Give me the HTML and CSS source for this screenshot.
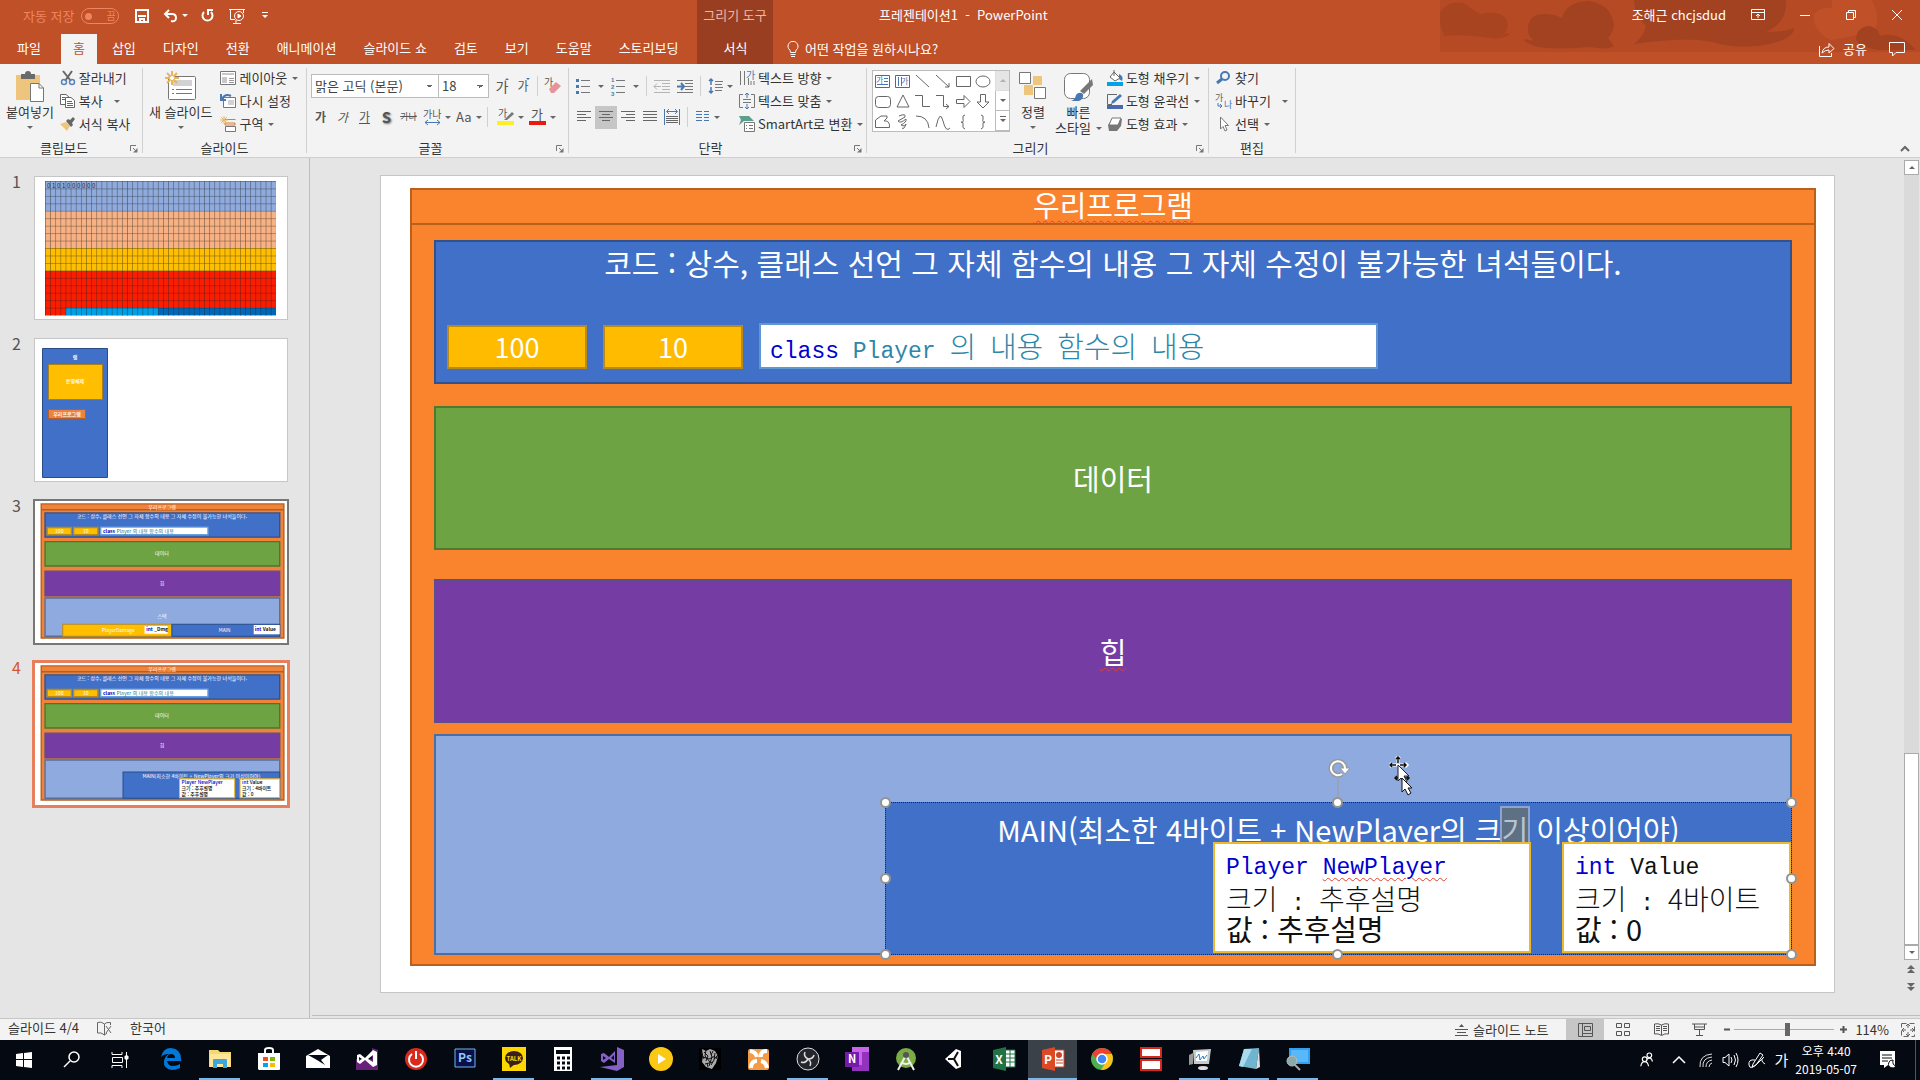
FILE: index.html
```html
<!DOCTYPE html>
<html lang="ko">
<head>
    <meta charset="UTF-8">
    <meta name="viewport" content="width=device-width, initial-scale=1.0">
    <title>프레젠테이션1 - PowerPoint</title>
    <link rel="stylesheet" href="styles.css">
</head>
<body>
    <!-- Title bar and tabs -->
    <header class="header">
        <svg class="header-art" width="480" height="52" viewBox="0 0 480 52">
            <rect width="480" height="52" fill="#b54a24"/>
            <path d="M0 12Q8 0 24 3Q32 10 40 14Q58 10 66 18Q70 28 64 34L70 33Q66 40 50 38Q24 34 4 36Q-2 20 0 12Z" fill="#a94421"/>
            <path d="M88 30Q88 14 104 14Q114 14 122 18Q126 2 148 1Q172 4 174 26Q172 34 168 38L174 46Q168 50 150 47Q110 50 94 46Q84 42 84 39L94 41Q88 36 88 30Z" fill="#a34220"/>
            <path d="M194 0H346Q348 22 326 32Q344 32 354 28Q354 38 330 44Q300 50 272 42Q250 36 194 44Q204 36 206 26Q194 14 194 0Z" fill="#a34220"/>
            <path d="M392 0H432Q440 16 436 28Q420 36 390 40Q372 30 374 14Q382 6 392 8Z" fill="#c05027"/>
            <path d="M416 38Q418 26 430 26Q438 28 440 36Q454 32 468 42L476 50H438Q416 46 416 38Z" fill="#a34220"/>
        </svg>
        <div class="title-row">
            <div class="quick-access">
                <span class="autosave">자동 저장</span>
                <button class="toggle" aria-label="자동 저장"><i></i>끔</button>
                <button class="qa save" aria-label="저장"><svg width="16" height="16" viewBox="0 0 16 16" fill="none" stroke="#fff" stroke-width="2"><path d="M2 2H14V14H2ZM4 8H12M6 14V11H10V14"/></svg></button>
                <button class="qa" aria-label="실행 취소"><svg width="26" height="16" viewBox="0 0 26 16"><path d="M3 6H10Q14 6 14 10T9 13M7 2L3 6L7 10" fill="none" stroke="#fff" stroke-width="2"/><path d="M20 6H26L23 9Z" fill="#fff"/></svg></button>
                <button class="qa" aria-label="다시 실행"><svg width="16" height="16" viewBox="0 0 16 16" fill="none" stroke="#fff" stroke-width="2"><path d="M4 4A5 5 0 1 0 11 4M8 1V7M8 2H13"/></svg></button>
                <button class="qa" aria-label="처음부터"><svg width="18" height="16" viewBox="0 0 18 16" fill="none" stroke="#fff" stroke-width="1"><path d="M1 1.500H17M2.500 2V11.500H7M15.500 2V5M5 15.500H13M8 12V15"/><circle cx="11" cy="8" r="4.500"/><path d="M10 6V10L13 8Z" fill="#fff"/></svg></button>
                <button class="qa more" aria-label="빠른 실행 도구 모음"><svg width="6" height="8" viewBox="0 0 6 8" fill="#fff"><path d="M0 0H6V1H0ZM0 3H6L3 6Z"/></svg></button>
            </div>
            <div class="tool-name">그리기 도구</div>
            <div class="doc-title">프레젠테이션1&nbsp; -&nbsp; PowerPoint</div>
            <div class="window-controls">
                <span class="user">조해근 chcjsdud</span>
                <button aria-label="리본 표시 옵션"><svg width="14" height="12" viewBox="0 0 14 12" fill="none" stroke="#fff"><path d="M.5 .5H13.500V10.500H.5ZM1 3.500H13M7 9V5M5 7L7 5L9 7"/></svg></button>
                <button aria-label="최소화"><svg width="12" height="12" viewBox="0 0 12 12"><path d="M1 6.500H11" stroke="#fff"/></svg></button>
                <button aria-label="이전 크기로"><svg width="12" height="12" viewBox="0 0 12 12" fill="none" stroke="#fff"><path d="M1.500 3.500H8.500V10.500H1.500ZM3.500 3V1.500H10.500V8.500H9"/></svg></button>
                <button aria-label="닫기"><svg width="12" height="12" viewBox="0 0 12 12"><path d="M1 1L11 11M11 1L1 11" stroke="#fff"/></svg></button>
            </div>
        </div>
        <div class="tab-row">
            <nav class="tabs">
                <a href="#" class="file">파일</a>
                <a href="#" class="active">홈</a>
                <a href="#">삽입</a>
                <a href="#">디자인</a>
                <a href="#">전환</a>
                <a href="#">애니메이션</a>
                <a href="#">슬라이드 쇼</a>
                <a href="#">검토</a>
                <a href="#">보기</a>
                <a href="#">도움말</a>
                <a href="#">스토리보딩</a>
            </nav>
            <a href="#" class="tool-tab">서식</a>
            <button class="tell-me"><svg width="12" height="17" viewBox="0 0 12 17" fill="none" stroke="#fff"><path d="M3.500 11.500Q3.500 9 1.500 7.500A5 5 0 1 1 10.500 7.500Q8.500 9 8.500 11.500ZM3.500 13.500H8.500M4 15.500H8"/></svg>어떤 작업을 원하시나요?</button>
            <div class="share">
                <button><svg width="16" height="15" viewBox="0 0 16 15" fill="none" stroke="#fff"><path d="M.5 4V14.500H12.500V11M3 11Q4 5 10 5V1.500L15 6.500L10 11V8Q6 8 3 11Z"/></svg>공유</button>
                <button aria-label="메모"><svg width="16" height="15" viewBox="0 0 16 15" fill="none" stroke="#fff"><path d="M.5 .5H15.500V10.500H7L3.500 14V10.500H.5Z"/></svg></button>
            </div>
        </div>
    </header>

    <!-- Ribbon -->
    <section class="ribbon">
        <div class="group clipboard">
            <div class="tools">
                <button class="big"><svg width="30" height="32" viewBox="0 0 30 32"><path d="M1 4H25V29H1Z" fill="#edc57c"/><path d="M6 3H10Q10 0 13 0T16 3H20V8H6Z" fill="#6a6a6a"/><path d="M15.500 12.500H24L28.500 17V30.500H15.500Z" fill="#fff" stroke="#777"/><path d="M24 12.500V17H28.500" fill="none" stroke="#777"/></svg><span>붙여넣기</span><i class="arr"></i></button>
                <div class="stack-tools">
                    <button><svg width="16" height="16" viewBox="0 0 16 16" fill="none"><path d="M3 1L11 11M12 1L5 11" stroke="#666" stroke-width="2"/><circle cx="4" cy="12" r="2.500" stroke="#5b86bd" stroke-width="1.500"/><circle cx="12" cy="12" r="2.500" stroke="#5b86bd" stroke-width="1.500"/></svg>잘라내기</button>
                    <button><svg width="16" height="16" viewBox="0 0 16 16" fill="#fff" stroke="#666"><path d="M.5 1.500H6L9.500 4.500V11.500H.5Z"/><path d="M5.500 4.500H11L14.500 7.500V14.500H5.500Z"/><path d="M7 8.500H12M7 10.500H13M7 12.500H13M2 4.500H5M2 6.500H5"/></svg>복사<i class="arr wide"></i></button>
                    <button><svg width="16" height="16" viewBox="0 0 16 16"><path d="M0 8L6 6L10 10L7 15Z" fill="#edc57c"/><path d="M6 5L8 3L10 4L13 1L15 3L12 7L13 9L11 11Z" fill="#666"/></svg>서식 복사</button>
                </div>
            </div>
            <div class="group-name">클립보드<button class="launcher" aria-label="클립보드 옵션"><svg width="8" height="8" viewBox="0 0 8 8"><path d="M.5 6V.5H6M3 3L7 7" fill="none" stroke="#777"/><path d="M3 7.500H7.500V3Z" fill="#777"/></svg></button></div>
        </div>

        <div class="group slides">
            <div class="tools">
                <button class="big"><svg width="32" height="32" viewBox="0 0 32 32"><rect x="3.500" y="5.500" width="27" height="23" rx="1" fill="#fff" stroke="#777"/><path d="M8 9H27V15H8Z" fill="#d2d2d2"/><path d="M11 18.500H27M11 22.500H27M7 18.500H9M7 22.500H9" stroke="#777"/><path d="M7 0V14M0 7H14M2 2L12 12M12 2L2 12" stroke="#e9b45c" stroke-width="2"/><circle cx="7" cy="7" r="2.500" fill="#fff" stroke="#e9b45c"/></svg><span>새 슬라이드</span><i class="arr"></i></button>
                <div class="stack-tools">
                    <button><svg width="16" height="16" viewBox="0 0 16 16"><path d="M.5 1.500H15.500V14.500H.5Z" fill="#fff" stroke="#777"/><path d="M2 3H14V5H2ZM2 7H7V13H2Z" fill="#c8c8c8"/><path d="M9 8.500H14M9 10.500H14M9 12.500H14" stroke="#999"/></svg>레이아웃<i class="arr"></i></button>
                    <button><svg width="16" height="16" viewBox="0 0 16 16"><path d="M3.500 4.500H15.500V14.500H3.500Z" fill="#fff" stroke="#777"/><path d="M8 7H14V12H8Z" fill="#d2d2d2"/><path d="M2 6Q5 0 11 3M1 1V7H6" fill="none" stroke="#4679b3" stroke-width="2"/></svg>다시 설정</button>
                    <button><svg width="16" height="16" viewBox="0 0 16 16"><path d="M5 3.500H15.500M5 7H15V9H5Z" stroke="#da7b3c" fill="none"/><path d="M5.500 10.500H15.500V15.500H5.500Z" fill="#fff" stroke="#777"/><path d="M4 0V8M0 4H8M1 1L7 7M7 1L1 7" stroke="#e9b45c"/></svg>구역<i class="arr"></i></button>
                </div>
            </div>
            <div class="group-name">슬라이드</div>
        </div>

        <div class="group font">
            <div class="tools rows">
                <div class="row">
                    <span class="selects"><select class="font-name" aria-label="글꼴"><option>맑은 고딕 (본문)</option></select><select class="font-size" aria-label="글꼴 크기"><option>18</option></select></span>
                    <button class="ic grow" aria-label="글꼴 크기 크게">가<i class="up"></i></button>
                    <button class="ic shrink" aria-label="글꼴 크기 작게">가<i class="down"></i></button>
                    <span class="sep"></span>
                    <button class="ic" aria-label="모든 서식 지우기"><svg width="18" height="18" viewBox="0 0 18 18"><text x="0" y="9" font-size="10" fill="#555">가</text><path d="M5 12L12 5L17 9L10 16H7Z" fill="#e5949a"/></svg></button>
                </div>
                <div class="row">
                    <button class="ic w22"><b>가</b></button>
                    <button class="ic w22"><em>가</em></button>
                    <button class="ic w22"><u>가</u></button>
                    <button class="ic w22 shadow">S</button>
                    <button class="ic w22 strike">가나</button>
                    <button class="ic gap-text" aria-label="문자 간격"><svg width="17" height="17" viewBox="0 0 17 17"><text x="-1" y="9" font-size="10" fill="#555">가나</text><path d="M1 13.500H16M4 11L1 13.500L4 16M13 11L16 13.500L13 16" fill="none" stroke="#4679b3"/></svg><i class="arr"></i></button>
                    <button class="ic case">Aa<i class="arr"></i></button>
                    <span class="sep"></span>
                    <button class="ic" aria-label="텍스트 강조 색"><svg width="17" height="18" viewBox="0 0 17 18"><text x="1" y="9" font-size="10" fill="#555">가</text><path d="M7 12L15 4L17 6L10 12Z" fill="#777"/><path d="M0 13H17V17H0Z" fill="#ffee26"/></svg><i class="arr"></i></button>
                    <button class="ic" aria-label="글꼴 색"><svg width="17" height="18" viewBox="0 0 17 18"><text x="2" y="11" font-size="13" fill="#555">가</text><path d="M0 13H17V17H0Z" fill="#e81b0c"/></svg><i class="arr"></i></button>
                </div>
            </div>
            <div class="group-name">글꼴<button class="launcher" aria-label="글꼴 옵션"><svg width="8" height="8" viewBox="0 0 8 8"><path d="M.5 6V.5H6M3 3L7 7" fill="none" stroke="#777"/><path d="M3 7.500H7.500V3Z" fill="#777"/></svg></button></div>
        </div>

        <div class="group paragraph">
            <div class="tools">
                <div class="rows">
                    <div class="row">
                        <button class="ic" aria-label="글머리 기호"><svg width="15" height="16" viewBox="0 0 15 16"><path d="M0 1H3V4H0ZM0 7H3V10H0ZM0 13H3V16H0Z" fill="#4679b3"/><path d="M5 2.500H14M5 8.500H14M5 14.500H14" stroke="#777"/></svg><i class="arr far"></i></button>
                        <button class="ic" aria-label="번호 매기기"><svg width="15" height="18" viewBox="0 0 15 18"><text x="0" y="5" class="tiny">1</text><text x="0" y="12" class="tiny">2</text><text x="0" y="19" class="tiny">3</text><path d="M5 3.500H14M5 9.500H14M5 15.500H14" stroke="#777"/></svg><i class="arr far"></i></button>
                        <span class="sep"></span>
                        <button class="ic" aria-label="목록 수준 줄임"><svg width="16" height="14" viewBox="0 0 16 14"><path d="M0 1.500H16M8 4.500H16M8 7.500H16M8 10.500H16M0 13.500H16M0 7.500H7M3 4.500L0 7.500L3 10.500" fill="none" stroke="#b4b4b4"/></svg></button>
                        <button class="ic" aria-label="목록 수준 늘림"><svg width="16" height="14" viewBox="0 0 16 14"><path d="M0 1.500H16M8 4.500H16M8 7.500H16M8 10.500H16M0 13.500H16" stroke="#777"/><path d="M0 7.500H7M4 4L7 7.500L4 11" fill="none" stroke="#4679b3" stroke-width="2"/></svg></button>
                        <span class="sep"></span>
                        <button class="ic" aria-label="줄 간격"><svg width="15" height="16" viewBox="0 0 15 16"><path d="M3 1V7M3 9V15M1 3L3 1L5 3M1 13L3 15L5 13" fill="none" stroke="#4679b3" stroke-width="1.500"/><path d="M7 3.500H15M7 6.500H14M7 9.500H15M7 12.500H14" stroke="#777"/></svg><i class="arr"></i></button>
                    </div>
                    <div class="row">
                        <button class="ic al" aria-label="왼쪽 맞춤"><svg width="14" height="12" viewBox="0 0 14 12"><path d="M0 .5H14M0 3.500H9M0 6.500H14M0 9.500H9" stroke="#666"/></svg></button>
                        <button class="ic al on" aria-label="가운데 맞춤"><svg width="14" height="12" viewBox="0 0 14 12"><path d="M0 .5H14M3 3.500H11M0 6.500H14M3 9.500H11" stroke="#666"/></svg></button>
                        <button class="ic al" aria-label="오른쪽 맞춤"><svg width="14" height="12" viewBox="0 0 14 12"><path d="M0 .5H14M5 3.500H14M0 6.500H14M5 9.500H14" stroke="#666"/></svg></button>
                        <button class="ic al" aria-label="양쪽 맞춤"><svg width="14" height="12" viewBox="0 0 14 12"><path d="M0 .5H14M0 3.500H14M0 6.500H14M0 9.500H14" stroke="#666"/></svg></button>
                        <button class="ic al" aria-label="균등 분할"><svg width="16" height="16" viewBox="0 0 16 16"><path d="M.5 0V16M15.500 0V16M3 2.500H13M5 0L2.500 2.500L5 5M11 0L13.500 2.500L11 5" fill="none" stroke="#4679b3"/><path d="M2 7.500H14M2 9.500H14M2 11.500H14M2 13.500H14" stroke="#666"/></svg></button>
                        <span class="sep"></span>
                        <button class="ic" aria-label="열"><svg width="14" height="12" viewBox="0 0 14 12"><path d="M0 .5H6M0 3.500H6M0 6.500H6M0 9.500H6M8 .5H13M8 3.500H13M8 6.500H13M8 9.500H13" stroke="#4679b3"/></svg><i class="arr"></i></button>
                    </div>
                </div>
                <div class="stack-tools">
                    <button><svg width="16" height="16" viewBox="0 0 16 16"><path d="M1.500 1V15M5.500 1V15M9.500 8V15" stroke="#777"/><text x="7" y="9" font-size="10" fill="#4679b3">가</text><path d="M12 11V15M15 11V15" stroke="#777"/></svg>텍스트 방향<i class="arr"></i></button>
                    <button><svg width="16" height="16" viewBox="0 0 16 16" fill="none"><path d="M4 1.500H.5V14.500H4M12 1.500H15.500V14.500H12M4 6.500H12M4 9.500H12" stroke="#777"/><path d="M8 0V5M6 2L8 0L10 2M8 11V16M6 14L8 16L10 14" stroke="#4679b3"/></svg>텍스트 맞춤<i class="arr"></i></button>
                    <button><svg width="16" height="16" viewBox="0 0 16 16"><path d="M0 0H10L15 5H5L0 9L2 4Z" fill="#5b9f8f"/><path d="M5.500 6.500H15.500V15.500H5.500Z" fill="#fff" stroke="#777"/><path d="M7 9.500H8M10 9.500H14M7 12.500H8M10 12.500H14" stroke="#777"/></svg>SmartArt로 변환<i class="arr"></i></button>
                </div>
            </div>
            <div class="group-name">단락<button class="launcher" aria-label="단락 옵션"><svg width="8" height="8" viewBox="0 0 8 8"><path d="M.5 6V.5H6M3 3L7 7" fill="none" stroke="#777"/><path d="M3 7.500H7.500V3Z" fill="#777"/></svg></button></div>
        </div>

        <div class="group drawing">
            <div class="tools">
                <div class="gallery">
                    <svg width="122" height="60" viewBox="0 0 122 60" fill="none" stroke="#666">
                        <path d="M2.500 4.500H16.500V16.500H2.500ZM22.500 4.500H36.500V16.500H22.500Z" stroke="#666"/>
                        <path d="M11 7.500H15M11 10.500H15M4 13.500H15M25.500 6V15M28.500 6V15" stroke="#4679b3"/>
                        <text x="3" y="12" font-size="8" class="blue">가</text><text x="28" y="13" font-size="8" class="blue">가</text>
                        <path d="M43 4L56 16M63 4L76 16M76 12V16H72M83.500 5.500H97.500V15.500H83.500Z"/>
                        <ellipse cx="110" cy="10.500" rx="7" ry="5.500"/>
                        <rect x="2.500" y="25.500" width="15" height="11" rx="3"/>
                        <path d="M30 24L36 36H24ZM42 24.500H49.500V35.500H57M63 24.500H70.500V35.500H76M73 33L76 35.500L73 38M83.500 28.500H91V24.500L97 30.500L91 36.500V32.500H83.500ZM107.500 23.500H112.500V31H116L110 37L104 31H107.500Z"/>
                        <path d="M2.500 56.500V49L8 45H14V47L11 50Q17 49 16.500 56.500ZM26 45Q33 42 32 46L25 50Q27 53 33 48Q34 51 28 54Q32 56 33 53Q31 59 29 57M43 45Q55 45 56 57M63 56Q67 38 70 50T77 57M92 44Q89 44 90 48T88 51Q91 51 90 54T92 58M108 44Q111 44 110 48T112 51Q109 51 110 54T108 58"/>
                    </svg>
                    <div class="gallery-scroll">
                        <button class="off" aria-label="위로"><i class="tri-up"></i></button>
                        <button aria-label="아래로"><i class="arr"></i></button>
                        <button aria-label="자세히"><i class="arr bar"></i></button>
                    </div>
                </div>
                <button class="big arrange"><svg width="28" height="32" viewBox="0 0 28 32"><path d="M14 5H23V14H14ZM5 14H14V24H5Z" fill="#edc57c"/><path d="M.5 1.500H11.500V12.500H.5ZM15.500 16.500H26.500V27.500H15.500Z" fill="#fff" stroke="#777"/></svg><span>정렬</span><i class="arr"></i></button>
                <button class="big quick"><svg width="30" height="32" viewBox="0 0 30 32"><rect x="1.500" y="2.500" width="25" height="25" rx="6" fill="#fff" stroke="#777"/><path d="M17 20L29 8L30 14L21 23Z" fill="#777"/><path d="M8 30Q12 29 13 24Q16 20 20 23Q21 28 16 30Z" fill="#4679b3"/></svg><span>빠른</span><span>스타일<i class="arr"></i></span></button>
                <div class="stack-tools">
                    <button><svg width="16" height="16" viewBox="0 0 16 16"><path d="M7 2L13 8L8 11L3 7ZM7 0V6" fill="#fff" stroke="#666"/><path d="M12 4Q17 6 15 11L12 9Z" fill="#4679b3"/><path d="M0 12H16V16H0Z" fill="#00a2e8"/></svg>도형 채우기<i class="arr"></i></button>
                    <button><svg width="16" height="16" viewBox="0 0 16 16"><path d="M10 1.500H.5V11.500H5" fill="none" stroke="#666"/><path d="M4 11L5 8L13 1L15 3L7 10Z" fill="#4679b3"/><path d="M0 12H16V16H0Z" fill="#4a68b0"/></svg>도형 윤곽선<i class="arr"></i></button>
                    <button><svg width="16" height="16" viewBox="0 0 16 16"><path d="M1 9L5 3H15L14 10L10 15H2Z" fill="#777"/><path d="M5 2H14L11 9H2Z" fill="#fff" stroke="#777"/></svg>도형 효과<i class="arr"></i></button>
                </div>
            </div>
            <div class="group-name">그리기<button class="launcher" aria-label="그리기 옵션"><svg width="8" height="8" viewBox="0 0 8 8"><path d="M.5 6V.5H6M3 3L7 7" fill="none" stroke="#777"/><path d="M3 7.500H7.500V3Z" fill="#777"/></svg></button></div>
        </div>

        <div class="group editing">
            <div class="tools">
                <div class="stack-tools">
                    <button><svg width="16" height="16" viewBox="0 0 16 16"><circle cx="9" cy="6" r="4" fill="none" stroke="#4679b3" stroke-width="2"/><path d="M6 9L1 13" stroke="#4679b3" stroke-width="3"/></svg>찾기</button>
                    <button><svg width="16" height="16" viewBox="0 0 16 16"><text x="-1" y="8" font-size="9" fill="#666">가</text><text x="8" y="15" font-size="9" fill="#4679b3">나</text><path d="M2 10V13H6M4 11L6 13L4 15" fill="none" stroke="#4679b3"/></svg>바꾸기<i class="arr wide"></i></button>
                    <button><svg width="16" height="16" viewBox="0 0 16 16"><path d="M4.500 1V13L7 10.500L9 15L11 14L9 9.500H12.500Z" fill="#fff" stroke="#777"/></svg>선택<i class="arr"></i></button>
                </div>
            </div>
            <div class="group-name">편집</div>
        </div>
        <button class="collapse" aria-label="리본 메뉴 축소"><svg width="10" height="7" viewBox="0 0 10 7"><path d="M1 6L5 2L9 6" fill="none" stroke="#666" stroke-width="2"/></svg></button>
    </section>

    <!-- Slide list and editing area -->
    <main class="workspace">
        <aside class="thumbs">
            <div class="thumb">
                <span>1</span>
                <svg viewBox="0 0 252 142">
                    <defs><pattern id="cells" width="5.130" height="7.450" patternUnits="userSpaceOnUse" x="10" y="4"><path d="M0 0V7.450M0 0H5.130" fill="none" stroke="#222" stroke-opacity=".7" stroke-width="1"/></pattern></defs>
                    <path d="M10 4H241V34H10Z" fill="#8faadc"/>
                    <path d="M10 34H241V71H10Z" fill="#f8b183"/>
                    <path d="M10 71H241V94H10Z" fill="#ffbf00"/>
                    <path d="M10 94H241V138H10Z" fill="#fc1d00"/>
                    <path d="M31 131H123V138H31Z" fill="#00a0e9"/>
                    <path d="M123 131H241V138H123Z" fill="#0168b8"/>
                    <path d="M10 4H241V139H10Z" fill="url(#cells)"/>
                    <text x="12" y="11" font-size="6" fill="#223">0 1 0 1 0 0 0 0 0 0</text>
                </svg>
            </div>
            <div class="thumb">
                <span>2</span>
                <svg viewBox="0 0 252 142">
                    <path d="M7.500 9.500H72.500V138.500H7.500Z" fill="#4070c8" stroke="#2a4d8a"/>
                    <path d="M13.500 25.500H67.500V60.500H13.500Z" fill="#ffbf00" stroke="#a8801a"/>
                    <path d="M13.500 70.500H50.500V79.500H13.500Z" fill="#f0833a" stroke="#b5602a"/>
                    <g fill="#fff" font-size="5" font-weight="500" text-anchor="middle"><text x="40" y="20">램</text><text x="40" y="44">운영체제</text><text x="32" y="77">우리프로그램</text></g>
                </svg>
            </div>
            <div class="thumb visited">
                <span>3</span>
                <svg viewBox="0 0 1454 818">
                    <g id="mini-base" stroke-width="8" text-anchor="middle" font-size="29" fill="#fff">
                        <path d="M36 16H1436V790H36Z" fill="#f0833a" stroke="#b5601f"/>
                        <path d="M36 50H1436" stroke="#b5601f"/>
                        <path d="M58 68H1412V208H58Z" fill="#4070c8" stroke="#3a4f80"/>
                        <path d="M58 234H1412V374H58Z" fill="#6da342" stroke="#4d7530"/>
                        <path d="M58 404H1412V547H58Z" fill="#753ca4" stroke="#5a5080"/>
                        <path d="M58 559H1412V780H58Z" fill="#8faadf" stroke="#5a6f98"/>
                        <path d="M70 152H210V194H70ZM223 152H363V194H223Z" fill="#ffbf00" stroke="#b58a20"/>
                        <path d="M379 150H998V194H379Z" fill="#fff" stroke="#68a0e0"/>
                        <text x="733" y="43">우리프로그램</text>
                        <text x="733" y="100">코드 : 상수, 클래스 선언 그 자체 함수의 내용 그 자체 수정이 불가능한 녀석들이다.</text>
                        <text x="140" y="184">100</text><text x="293" y="184">10</text>
                        <text x="733" y="312">데이터</text><text x="733" y="484">힙</text>
                        <text x="392" y="183" text-anchor="start" fill="#2684a0"><tspan fill="#0000c0" font-weight="700">class</tspan> Player 의 내용 함수의 내용</text>
                    </g>
                    <text x="733" y="675" text-anchor="middle" font-size="29" fill="#fff">스택</text>
                    <path d="M160 710H790V780H160Z" fill="#ffbf00" stroke="#b58a20" stroke-width="6"/>
                    <path d="M790 710H1412V780H790Z" fill="#4070c8" stroke="#2a4d8a" stroke-width="6"/>
                    <path d="M632 720H765V765H632ZM1262 715H1412V768H1262Z" fill="#fff"/>
                    <g font-size="28" fill="#fff"><text x="385" y="755">PlayerDamage</text><text x="1060" y="755">MAIN</text><text x="642" y="750" fill="#111" font-weight="700"><tspan fill="#0000c0">int</tspan> _Dmg</text><text x="1268" y="750" fill="#111" font-weight="700"><tspan fill="#0000c0">int</tspan> Value</text></g>
                </svg>
            </div>
            <div class="thumb current">
                <span>4</span>
                <svg viewBox="0 0 1454 818">
                    <use href="#mini-base"/>
                    <path d="M508 628H1412V780H508Z" fill="#4070c8" stroke="#2a4d8a" stroke-width="6"/>
                    <text x="960" y="664" text-anchor="middle" font-size="29" fill="#fff">MAIN(최소한 4바이트 + NewPlayer의 크기 이상이어야)</text>
                    <path d="M834 668H1152V776H834ZM1183 668H1412V776H1183Z" fill="#fff" stroke="#e8b830" stroke-width="6"/>
                    <g font-size="28" font-weight="500" fill="#000"><text x="846" y="696" fill="#0000c0">Player NewPlayer</text><text x="846" y="730">크기 : 추후설명</text><text x="846" y="764">값 : 추후설명</text><text x="1195" y="696"><tspan fill="#0000c0">int</tspan> Value</text><text x="1195" y="730">크기 : 4바이트</text><text x="1195" y="764">값 : 0</text></g>
                </svg>
            </div>
        </aside>

        <section class="editor">
            <div class="canvas">
                <div class="slide">
                    <div class="program">
                        <h1><span class="typo">우리프로그램</span></h1>
                        <div class="areas">
                            <div class="area code">
                                <p>코드 : 상수, 클래스 선언 그 자체 함수의 내용 그 자체 수정이 불가능한 녀석들이다.</p>
                                <div class="constants">
                                    <div class="constant">100</div>
                                    <div class="constant">10</div>
                                    <div class="class-def"><span class="mono"><span class="keyword">class</span> Player </span>의<span class="mono"> </span>내용<span class="mono"> </span>함수의<span class="mono"> </span>내용</div>
                                </div>
                            </div>
                            <div class="area data">데이터</div>
                            <div class="area heap"><span class="typo">힙</span></div>
                            <div class="area stack">
                                <div class="frame">
                                    <p>MAIN(최소한 4바이트 + <span class="typo">NewPlayer</span>의 크<mark>기</mark> 이상이어야)</p>
                                    <div class="variable player">
                                        <div class="mono keyword">Player <span class="typo">NewPlayer</span></div>
                                        <div class="thin">크기<span class="mono"> : </span>추후설명</div>
                                        <div class="value">값 : 추후설명</div>
                                    </div>
                                    <div class="variable number">
                                        <div class="mono"><span class="keyword">int</span> Value</div>
                                        <div class="thin">크기<span class="mono"> : </span>4바이트</div>
                                        <div class="value">값 : 0</div>
                                    </div>
                                    <!-- Selection handles -->
                                    <i class="handle tl"></i><i class="handle tc"></i><i class="handle tr"></i>
                                    <i class="handle ml"></i><i class="handle mr"></i>
                                    <i class="handle bl"></i><i class="handle bc"></i><i class="handle br"></i>
                                    <svg class="rotate" width="24" height="44" viewBox="0 0 24 44" fill="none"><path d="M12 20V40" stroke="#9a9a9a"/><path d="M16 15A7 7 0 1 1 19 9" stroke="#999" stroke-width="5"/><path d="M14 9H24L19 15Z" fill="#fff" stroke="#999"/><path d="M16 15A7 7 0 1 1 19 9V11" stroke="#fff" stroke-width="2"/></svg>
                                    <svg class="pointer" width="26" height="40" viewBox="0 0 26 40"><path d="M9 1V7M1 9H18M7 3L9 1L11 3M3 7L1 9L3 11M16 7L18 9L16 11" fill="none" stroke="#fff" stroke-width="3"/><path d="M9 2V7M2 9H7M11 9H17M7 3L9 1L11 3M3 7L1 9L3 11M15 7L17 9L15 11M6 22H20M8 20L6 22L8 24M18 20L20 22L18 24" fill="none" stroke="#111" stroke-width="1.500"/><path d="M9 9V25L12 22L15 28L18 26L15 20L20 20Z" fill="#fff" stroke="#222"/><path d="M13 22V36L16 33L19 39L22 37L19 32H23Z" fill="#fff" stroke="#111"/></svg>
                                </div>
                            </div>
                        </div>
                    </div>
                </div>
            </div>
            <div class="scrollbar">
                <button class="sb" aria-label="위로"><i class="tri-up"></i></button>
                <div class="track"></div>
                <div class="sb-thumb"></div>
                <button class="sb" aria-label="아래로"><i class="arr"></i></button>
                <button class="page" aria-label="이전 슬라이드"><svg width="9" height="9" viewBox="0 0 9 9" fill="#666"><path d="M4 0L8 4H0ZM4 4L8 8H0Z"/></svg></button>
                <button class="page" aria-label="다음 슬라이드"><svg width="9" height="9" viewBox="0 0 9 9" fill="#666"><path d="M0 0H8L4 4ZM0 4H8L4 8Z"/></svg></button>
            </div>
        </section>
    </main>

    <!-- Status bar -->
    <footer class="status">
        <span>슬라이드 4/4</span>
        <button aria-label="맞춤법 검사"><svg width="15" height="15" viewBox="0 0 15 15" fill="none" stroke="#666"><path d="M7.500 3Q4 0 .5 1.500V12Q4 11 7.500 14V3Q9 1 13.500 1.500V4M9 5L14 12M14 5L9 12M7.500 14L10 12"/></svg></button>
        <span>한국어</span>
        <div class="view-tools">
            <button class="notes"><svg width="13" height="12" viewBox="0 0 13 12"><path d="M6.500 0L9 3H4Z" fill="#555"/><path d="M0 5.500H13M2 8.500H11M0 11.500H13" stroke="#555"/></svg>슬라이드 노트</button>
            <button class="view on" aria-label="기본"><svg width="15" height="14" viewBox="0 0 15 14" fill="none" stroke="#555"><path d="M.5 .5H14.500V13.500H.5ZM4.500 1V13M5 10.500H14M6.500 3.500H12.500V7.500H6.500Z"/></svg></button>
            <button class="view" aria-label="여러 슬라이드"><svg width="15" height="13" viewBox="0 0 15 13" fill="none" stroke="#555"><path d="M.5 .5H5.500V4.500H.5ZM8.500 .5H13.500V4.500H8.500ZM.5 8.500H5.500V12.500H.5ZM8.500 8.500H13.500V12.500H8.500Z"/></svg></button>
            <button class="view" aria-label="읽기용 보기"><svg width="15" height="13" viewBox="0 0 15 13" fill="none" stroke="#555"><path d="M7.500 2Q4 0 .5 1V11Q4 10 7.500 12.500Q11 10 14.500 11V1Q11 0 7.500 2ZV12M2 3.500H6M2 5.500H6M2 7.500H6M9 3.500H13M9 5.500H13M9 7.500H13"/></svg></button>
            <button class="view" aria-label="슬라이드 쇼"><svg width="15" height="13" viewBox="0 0 15 13" fill="none" stroke="#555"><path d="M0 1H15M2.500 1V6.500H12.500V1M7.500 7V12M4 12.500H11M3 4H12"/></svg></button>
            <button class="zoom-btn" aria-label="축소"><svg width="7" height="7" viewBox="0 0 7 7"><path d="M0 3.500H6" stroke="#555" stroke-width="2"/></svg></button>
            <input type="range" min="0" max="100" value="53" aria-label="확대/축소">
            <button class="zoom-btn" aria-label="확대"><svg width="7" height="7" viewBox="0 0 7 7"><path d="M0 3.500H7M3.500 0V7" stroke="#555" stroke-width="2"/></svg></button>
            <button class="percent">114%</button>
            <button class="fit" aria-label="창에 맞춤"><svg width="14" height="14" viewBox="0 0 14 14" fill="none" stroke="#666"><path d="M.5 .5H13.500V13.500H.5Z" stroke-dasharray="5 3"/><path d="M7 2V5M7 9V12M2 7H5M9 7H12M5 3L7 1L9 3M5 11L7 13L9 11M3 5L1 7L3 9M11 5L13 7L11 9"/></svg></button>
        </div>
    </footer>

    <!-- Windows taskbar -->
    <footer class="taskbar">
        <div class="system">
            <button aria-label="시작"><svg width="18" height="18" viewBox="0 0 18 18" fill="#fff"><path d="M1 3L8 2V8H1ZM9 2L17 1V8H9ZM1 9H8V16L1 15ZM9 9H17V17L9 16Z"/></svg></button>
            <button aria-label="검색"><svg width="18" height="18" viewBox="0 0 18 18" fill="none" stroke="#fff" stroke-width="1.500"><circle cx="11" cy="6" r="5"/><path d="M7 10L1 16"/></svg></button>
            <button aria-label="작업 보기"><svg width="18" height="18" viewBox="0 0 18 18" fill="none" stroke="#fff"><path d="M1 1V3.500H11V1M1 17V14.500H11V17M1.500 6.500H11.500V11.500H1.500ZM15.500 1V17"/><path d="M14 5H17V8H14Z" fill="#fff"/></svg></button>
        </div>
        <nav class="apps">
            <button aria-label="Edge"><svg width="24" height="24" viewBox="0 0 24 24"><path d="M2 10Q4 1 12 1Q22 2 22 12V14H8Q9 19 14 19Q18 19 21 17V21Q17 23 13 23Q4 22 5 14Q6 9 10 7Q4 7 2 10ZM8 11H16Q16 7 12 7Q9 7 8 11Z" fill="#0078d7" fill-rule="evenodd"/></svg></button>
            <button class="run" aria-label="파일 탐색기"><svg width="24" height="24" viewBox="0 0 24 24"><path d="M1 3H10L12 5H23V20H1Z" fill="#f7d774"/><path d="M2 7H22V20H2Z" fill="#ffe596"/><path d="M5 13Q5 12 6 12H18L19 13V21H15V17H9V21H5Z" fill="#3ca7de"/></svg></button>
            <button aria-label="Microsoft Store"><svg width="24" height="24" viewBox="0 0 24 24"><path d="M1 6H23V22Q23 23 22 23H2L1 22Z" fill="#fff"/><path d="M8 7V3Q8 1 12 1T16 3V7" fill="none" stroke="#fff" stroke-width="2"/><path d="M6 10H11V14H6Z" fill="#f25022"/><path d="M13 10H18V14H13Z" fill="#7fba00"/><path d="M6 16H11V20H6Z" fill="#00a4ef"/><path d="M13 16H18V20H13Z" fill="#ffb900"/></svg></button>
            <button aria-label="메일"><svg width="24" height="24" viewBox="0 0 24 24"><path d="M0 9L12 2L24 9V21H0Z" fill="#fff"/><path d="M2 8H22L15 13L19 18L11 13Z" fill="#050a12"/></svg></button>
            <button aria-label="Visual Studio"><svg width="24" height="24" viewBox="0 0 24 24"><path d="M1 12H17V1L23 3V23H1Z" fill="#68217a"/><path d="M2 8L5 7L10 11L18 3L22 5V18L18 20L10 13L5 17L2 15ZM4 10V14L7 12ZM18 8L13 12L18 15Z" fill="#fff" fill-rule="evenodd"/></svg></button>
            <button aria-label="전원"><svg width="24" height="24" viewBox="0 0 24 24"><circle cx="12" cy="12" r="11" fill="#d92a1c"/><path d="M8 7A7 7 0 1 0 16 7M12 4V12" fill="none" stroke="#fff" stroke-width="2"/></svg></button>
            <button aria-label="Photoshop"><svg width="24" height="24" viewBox="0 0 24 24"><path d="M2 2H22V20H2Z" fill="#0a1047" stroke="#6fb6f0"/><text x="12" y="15" font-size="12" font-weight="700" text-anchor="middle" fill="#8ccbff">Ps</text></svg></button>
            <button class="run" aria-label="카카오톡"><svg width="24" height="24" viewBox="0 0 24 24"><path d="M0 0H24V24H0Z" fill="#fcd800"/><ellipse cx="12" cy="11" rx="9" ry="7" fill="#3b1f1e"/><path d="M7 16L8 21L13 17Z" fill="#3b1f1e"/><text x="12" y="14" font-size="6" font-weight="700" text-anchor="middle" fill="#fcd800">TALK</text></svg></button>
            <button aria-label="계산기"><svg width="24" height="24" viewBox="0 0 24 24"><path d="M3 0H21V24H3Z" fill="#fff"/><path d="M5 3H19V7H5Z" fill="#050a12"/><path d="M6 11H19M6 16H19M6 21H19" stroke="#050a12" stroke-width="3" stroke-dasharray="3 2"/></svg></button>
            <button class="run" aria-label="Visual Studio 2017"><svg width="24" height="24" viewBox="0 0 24 24"><path d="M17 0L24 3V20L17 24L0 20L17 18Z" fill="#8661c5"/><path d="M1 7L4 6L9 10L15 4V16L9 12L4 16L1 14ZM3 9V13L6 11ZM14 8L11 11L14 13Z" fill="#8661c5" fill-rule="evenodd"/></svg></button>
            <button aria-label="팟플레이어"><svg width="24" height="24" viewBox="0 0 24 24"><circle cx="12" cy="12" r="12" fill="#fbc813"/><path d="M9 7L17 12L9 17Z" fill="#fff"/></svg></button>
            <button aria-label="게임"><svg width="24" height="24" viewBox="0 0 24 24"><path d="M1 1H23V23H1Z" fill="#000"/><path d="M4 2L8 4L12 2L17 4L20 9L18 16L14 22L8 20L4 15L5 9Z" fill="#aaa"/><path d="M6 5L10 9L8 14M12 4L14 10L11 19M17 6L16 13L13 18M5 10L11 12L17 9M7 17L15 15M3 5L6 12M20 7L18 12M8 3L7 9L12 15M15 4L13 8M9 16L10 20M16 12L19 9" stroke="#111" fill="none"/></svg></button>
            <button aria-label="도구"><svg width="24" height="24" viewBox="0 0 24 24"><rect x="1" y="2" width="21" height="21" rx="2" fill="#f39a45"/><path d="M3 4Q9 5 10 10M20 4Q13 4 14 10M4 21Q4 14 10 14M20 21Q19 15 14 14" fill="none" stroke="#fff" stroke-width="4"/></svg></button>
            <button class="run" aria-label="OBS"><svg width="24" height="24" viewBox="0 0 24 24" fill="none" stroke="#ddd"><circle cx="12" cy="12" r="11" fill="#25252d"/><path d="M9 5Q7 9 12 12Q17 12 18 8M12 12Q9 17 5 15M12 12Q16 15 14 19" stroke-width="1.500"/></svg></button>
            <button aria-label="OneNote"><svg width="24" height="24" viewBox="0 0 24 24"><path d="M7 0H24V24H7Z" fill="#ca64ea"/><path d="M17 5H24V24H7V18H17Z" fill="#9332bf"/><path d="M0 5H14V20H0Z" fill="#7719aa"/><text x="7" y="16" font-size="11" font-weight="700" text-anchor="middle" fill="#fff">N</text></svg></button>
            <button aria-label="Android Studio"><svg width="24" height="24" viewBox="0 0 24 24"><circle cx="12" cy="11" r="10" fill="#7aab44"/><path d="M12 8L4 23M12 8L20 23M7 15Q12 19 17 15" fill="none" stroke="#eee" stroke-width="2"/><circle cx="12" cy="8" r="3" fill="#555"/></svg></button>
            <button aria-label="Unity"><svg width="24" height="24" viewBox="0 0 24 24"><path d="M2 12L13 2L18 4V20L13 22Z" fill="#fff"/><path d="M5 12H11L15 5M11 12L15 19" fill="none" stroke="#111" stroke-width="2"/></svg></button>
            <button aria-label="Excel"><svg width="24" height="24" viewBox="0 0 24 24"><path d="M13 3H23V20H13Z" fill="#fff" stroke="#217346"/><path d="M13 7H23M13 11H23M13 15H23M18 3V20" stroke="#217346"/><path d="M1 3L14 0V24L1 21Z" fill="#217346"/><text x="7" y="17" font-size="12" font-weight="700" text-anchor="middle" fill="#fff">X</text></svg></button>
            <button class="run active" aria-label="PowerPoint"><svg width="24" height="24" viewBox="0 0 24 24"><path d="M13 3H23V20H13Z" fill="#fff" stroke="#d04423"/><path d="M15 13H22M15 16H22" stroke="#d04423"/><circle cx="18" cy="8" r="3" fill="#d04423"/><path d="M1 3L14 0V24L1 21Z" fill="#dc4a25"/><text x="7" y="17" font-size="12" font-weight="700" text-anchor="middle" fill="#fff">P</text></svg></button>
            <button aria-label="Chrome"><svg width="24" height="24" viewBox="0 0 24 24"><circle cx="12" cy="12" r="11" fill="#4caf50"/><path d="M2 7Q6 1 12 1Q19 1 22 7H12L7 12Z" fill="#ea4335"/><path d="M22 7Q24 12 21 18Q17 23 11 23L17 13L14 7Z" fill="#fbc116"/><circle cx="12" cy="12" r="5" fill="#4285f4" stroke="#fff" stroke-width="1.500"/></svg></button>
            <button aria-label="반디캠"><svg width="24" height="24" viewBox="0 0 24 24"><path d="M2 1H22V10H2ZM2 13H22V23H2Z" fill="#fff" stroke="#d9261c" stroke-width="2"/></svg></button>
            <button class="run" aria-label="모니터"><svg width="24" height="24" viewBox="0 0 24 24"><path d="M1 8L5 6V17L1 18Z" fill="#999"/><path d="M5 3L23 2L21 17L6 17Z" fill="#c9c9c9"/><path d="M8 5L20 4L19 14L8 14Z" fill="#fff"/><path d="M8 11L11 7L12 13L15 9L16 12L19 8" fill="none" stroke="#2a7ec4"/><ellipse cx="15" cy="21" rx="5" ry="2" fill="#ddd"/></svg></button>
            <button class="run" aria-label="메모장"><svg width="24" height="24" viewBox="0 0 24 24"><path d="M7 2L22 1L19 22L2 19Z" fill="#6fb5cf"/><path d="M7 2L15 2L6 20L2 19Z" fill="#a8dcec"/><path d="M22 1L23 20L19 22Z" fill="#ddd"/></svg></button>
            <button class="run" aria-label="돋보기"><svg width="24" height="24" viewBox="0 0 24 24"><path d="M3 1H24V17H3Z" fill="#2f9ff0"/><path d="M5 3H22V15H5Z" fill="#58b8fa"/><circle cx="6" cy="14" r="5" fill="#8aa" stroke="#bbb"/><path d="M9 18L14 23" stroke="#aaa" stroke-width="2"/></svg></button>
        </nav>
        <div class="tray">
            <button aria-label="피플"><svg width="14" height="18" viewBox="0 0 18 20" fill="none" stroke="#fff" stroke-width="1.500"><circle cx="12" cy="4" r="3"/><circle cx="6" cy="9" r="3"/><path d="M1 18Q2 12 6 12T11 18M9 9Q12 6 15 9L16 12"/></svg></button>
            <button class="chev" aria-label="숨겨진 아이콘"><svg width="14" height="8" viewBox="0 0 14 8"><path d="M1 7L7 1L13 7" fill="none" stroke="#fff" stroke-width="1.500"/></svg></button>
            <button class="net" aria-label="네트워크"><svg width="14" height="14" viewBox="0 0 14 14" fill="none" stroke="#ddd"><path d="M1 14Q0 2 13 1M4 14Q3 5 13 4M7 14Q7 8 13 7M10 14Q10 11 13 10"/></svg></button>
            <button aria-label="볼륨"><svg width="17" height="16" viewBox="0 0 17 16" fill="none" stroke="#fff"><path d="M1 5.500H3L7 2V14L3 10.500H1ZM9 5Q11 8 9 11M12 3Q15 8 12 13M14 1Q18 8 14 15"/></svg></button>
            <button aria-label="펜"><svg width="18" height="18" viewBox="0 0 18 18" fill="none" stroke="#fff"><path d="M5 13L12 2L15 4L8 14L4 16ZM7 9Q0 8 1 14T10 12T15 7T17 13"/></svg></button>
            <button class="ime">가</button>
            <div class="clock">오후 4:40<br>2019-05-07</div>
            <button class="notice" aria-label="알림"><svg width="18" height="18" viewBox="0 0 18 18"><path d="M1 0H16V14H9L5 17V14H1Z" fill="#fff"/><path d="M3 4H13M3 7H13M3 10H9" stroke="#050a12"/><path d="M14 9A4 4 0 1 0 17 15Q13 14 14 9Z" fill="#fff" stroke="#050a12"/></svg></button>
        </div>
    </footer>
</body>
</html>
```
FILE: styles.css
```css
* {
    box-sizing: border-box;
}

body {
    margin: 0;
    min-height: 100vh;
    display: flex;
    flex-direction: column;
    font-family: "Noto Sans CJK KR", sans-serif;
    font-size: 13px;
    line-height: 16px;
    color: #333;
    background-color: #e5e5e5;
}

button {
    display: flex;
    align-items: center;
    justify-content: center;
    margin: 0;
    padding: 0;
    border: 0;
    background: none;
    color: inherit;
    font: inherit;
    white-space: nowrap;
}

svg {
    flex: none;
    display: block;
}

p,
h1 {
    margin: 0;
    font: inherit;
}

/* Small drop-down arrows */
.arr,
.down {
    flex: none;
    border: 3px solid transparent;
    border-top-color: #666;
    border-bottom: 0;
    margin-left: 5px;
}

.tri-up,
.up {
    border: 3px solid transparent;
    border-bottom-color: #666;
    border-top: 0;
}

/* Header */
.header {
    position: relative;
    color: #fff;
    background-color: #c05027;
}

.header-art {
    position: absolute;
    top: 0;
    right: 0;
}

.title-row,
.tab-row {
    position: relative;
    display: flex;
    align-items: stretch;
    height: 34px;
}

.tab-row {
    height: 30px;
}

.quick-access {
    width: 697px;
    padding: 0 0 2px 23px;
    display: flex;
    align-items: center;
}

.autosave {
    margin-right: 7px;
    color: #ee8560;
}

.toggle {
    width: 38px;
    height: 16px;
    gap: 14px;
    border: 1px solid #ee8560;
    border-radius: 8px;
    color: #ee8560;
    font-size: 10px;
}

.toggle i {
    width: 7px;
    height: 7px;
    border-radius: 50%;
    background-color: #ee8560;
}

.qa {
    margin-right: 12px;
}

.qa.save {
    margin-left: 15px;
}

.qa.more {
    margin-left: 4px;
}

.tool-name {
    width: 76px;
    padding-bottom: 4px;
    display: flex;
    align-items: center;
    justify-content: center;
    color: #f3b79f;
    background-color: #9a3e22;
}

.doc-title {
    padding: 7px 0 0 106px;
    white-space: nowrap;
}

.window-controls {
    display: flex;
    align-items: center;
    gap: 34px;
    margin-left: auto;
    padding: 0 17px 4px 0;
}

.user {
    margin-right: -9px;
}

.tabs {
    display: flex;
    width: 697px;
}

.tabs a,
.tool-tab {
    padding: 6px 13px 6px 14px;
    color: #fff;
    text-decoration: none;
    white-space: nowrap;
}

.tabs .file {
    padding: 6px 20px 6px 17px;
}

.tabs .active {
    margin-right: 1px;
    padding: 6px 12px;
    color: #c05027;
    background-color: #f3f3f3;
}

.tool-tab {
    width: 76px;
    text-align: center;
    background-color: #9a3e22;
}

.tell-me {
    margin-left: 14px;
    gap: 6px;
}

.share {
    display: flex;
    gap: 22px;
    margin-left: auto;
    padding-right: 15px;
}

.share button {
    gap: 8px;
}

/* Ribbon */
.ribbon {
    display: flex;
    height: 94px;
    padding: 4px 0;
    border-bottom: 1px solid #cfcfcf;
    background-color: #f3f3f3;
}

.ribbon svg {
    overflow: visible;
}

.group {
    flex: none;
    display: flex;
    flex-direction: column;
    border-right: 1px solid #d0d0d0;
}

.clipboard {
    width: 143px;
}

.slides {
    width: 164px;
}

.font {
    width: 262px;
}

.paragraph {
    width: 298px;
}

.drawing {
    width: 342px;
}

.editing {
    width: 87px;
}

.tools {
    display: flex;
    flex: none;
    height: 72px;
    padding: 0 4px;
}

.group-name {
    position: relative;
    padding-right: 14px;
    text-align: center;
}

.slides .group-name,
.editing .group-name {
    padding-right: 0;
}

.launcher {
    position: absolute;
    right: 4px;
    top: 5px;
}

.big {
    flex-direction: column;
    justify-content: flex-start;
    padding: 3px 2px 0;
}

.big span {
    display: flex;
    align-items: center;
    margin-top: 1px;
}

.big > .arr {
    margin: 6px 0 0;
}

.slides .big {
    padding-right: 4px;
}

.stack-tools {
    display: flex;
    flex-direction: column;
    gap: 7px;
    padding: 2px 0 0 4px;
}

.stack-tools button {
    justify-content: flex-start;
    gap: 3px;
    height: 16px;
}

.stack-tools .arr {
    margin-left: 2px;
}

.stack-tools .arr.wide {
    margin-left: 8px;
}

.rows {
    display: flex;
    flex-direction: column;
}

.row {
    display: flex;
    align-items: center;
    gap: 6px;
    height: 32px;
    margin-bottom: -1px;
}

.rows .row:first-child {
    margin-top: 2px;
}

.selects {
    display: flex;
}

.selects select {
    height: 24px;
    padding: 0 14px 0 3px;
    border: 1px solid #bcbcbc;
    border-radius: 0;
    appearance: none;
    color: #444;
    font: inherit;
    background: linear-gradient(to bottom right, #666 50%, transparent 50%) no-repeat right 5px center / 3px 3px, linear-gradient(to bottom left, #666 50%, transparent 50%) no-repeat right 8px center / 3px 3px, #fff;
}

.font-name {
    width: 128px;
}

.selects .font-size {
    width: 50px;
    border-left: 0;
}

.ic {
    color: #555;
    font-size: 12px;
}

.grow,
.shrink {
    align-items: flex-start;
    width: 15px;
    font-size: 14px;
}

.shrink {
    font-size: 12px;
}

.ic .up,
.ic .down {
    margin: 0 0 0 -3px;
    border-width: 2px;
    border-bottom-color: #4679b3;
    border-top: 0;
}

.ic .down {
    border: 2px solid transparent;
    border-top-color: #4679b3;
    border-bottom: 0;
}

.sep {
    width: 1px;
    height: 20px;
    background-color: #d0d0d0;
}

.font .row + .row {
    gap: 3px;
}

.w22 {
    width: 19px;
}

.shadow {
    font-weight: 700;
    font-size: 15px;
    text-shadow: 1px 1px 2px #777;
}

.strike {
    font-size: 9px;
    text-decoration: line-through;
}

.ic .arr {
    margin-left: 4px;
}

.font .ic .arr {
    margin-right: 2px;
}

.font .row + .row .sep {
    margin-right: 6px;
}

.gap-text {
    margin-left: 3px;
}

.case {
    font-size: 13px;
}

.tiny {
    font-family: "Liberation Sans", sans-serif;
    font-size: 6px;
    font-weight: 700;
    fill: #4679b3;
}

.blue {
    fill: #4679b3;
    stroke: none;
}

.paragraph .tools {
    padding: 0 0 0 7px;
}

.paragraph .rows {
    width: 163px;
}

.paragraph .row:first-child {
    gap: 7px;
}

.paragraph .row + .row {
    gap: 0;
}

.paragraph .row + .row .sep {
    margin: 0 8px 0 4px;
}

.paragraph .arr.far {
    margin-left: 7px;
}

.al {
    width: 22px;
    height: 23px;
}

.al:first-child {
    margin-left: -3px;
}

.al.on {
    background-color: #c6c6c6;
}

.paragraph .stack-tools {
    padding-left: 0;
}

.gallery {
    display: flex;
    align-self: flex-start;
    margin: 2px 7px 0 1px;
    border: 1px solid #bcbcbc;
    background-color: #fff;
}

.gallery-scroll {
    display: flex;
    flex-direction: column;
    width: 14px;
}

.gallery-scroll button {
    flex: 1;
    border-left: 1px solid #bcbcbc;
    border-bottom: 1px solid #bcbcbc;
}

.gallery-scroll .arr {
    margin: 0;
}

.gallery-scroll .off {
    opacity: 0.5;
    background-color: #ccc;
}

.bar {
    position: relative;
}

.bar::before {
    content: "";
    position: absolute;
    left: -3px;
    top: -6px;
    width: 6px;
    height: 1px;
    background-color: #666;
}

.quick {
    margin-left: 4px;
}

.quick span + span {
    margin-top: 0;
}

.drawing .stack-tools {
    padding-left: 3px;
}

.editing .tools {
    padding-left: 3px;
}

.collapse {
    align-self: flex-end;
    margin: 0 10px 1px auto;
}

/* Workspace */
.workspace {
    flex: 1;
    display: flex;
}

.thumbs {
    width: 310px;
    padding: 18px 0 0 12px;
    display: flex;
    flex-direction: column;
    gap: 18px;
    border-right: 1px solid #bebebe;
}

.thumb {
    display: flex;
    align-items: flex-start;
    height: 144px;
    color: #555;
    font-size: 16px;
    line-height: 10px;
}

.thumb span {
    width: 22px;
}

.thumb svg {
    width: 254px;
    height: 144px;
    border: 1px solid #c6c6c6;
    background-color: #fff;
}

.thumb.visited svg {
    border-color: #777;
    outline: 1px solid #777;
}

.thumb.current svg {
    border-color: #e77f5c;
    outline: 2px solid #e77f5c;
}

.thumb.current {
    color: #d4562e;
}

.editor {
    flex: 1;
    display: flex;
    margin-left: 2px;
    border-bottom: 1px solid #bebebe;
    margin-bottom: 2px;
}

.canvas {
    flex: 1;
    padding: 17px 69px 20px 68px;
}

.slide {
    display: flex;
    aspect-ratio: 16 / 9;
    padding: 12px 18px 26px 29px;
    border: 1px solid #c6c6c6;
    background-color: #fff;
    color: #fff;
    font-size: 29px;
    line-height: 32px;
}

.program {
    flex: 1;
    display: flex;
    flex-direction: column;
    border: 2px solid #b8601c;
    background-color: #fa842d;
}

.program h1 {
    height: 35px;
    border-bottom: 2px solid #b8601c;
    line-height: 28px;
    text-align: center;
}

.typo {
    text-decoration: underline wavy #e0402c 1px;
    text-underline-offset: 3px;
}

/* Each row share includes the gap under its box */
.areas {
    flex: 1;
    display: grid;
    grid-template-rows: minmax(0, 166fr) minmax(0, 173fr) minmax(0, 155fr) minmax(0, 221fr);
    padding: 15px 22px 9px;
}

.area {
    display: flex;
    align-items: center;
    justify-content: center;
    border: 2px solid #2f528f;
}

.code {
    flex-direction: column;
    align-items: stretch;
    justify-content: space-between;
    padding: 4px 11px 13px;
    margin-bottom: 22px;
    text-align: center;
    background-color: #4070c8;
}

.code p {
    font-size: 30px;
}

.constants {
    display: flex;
    align-items: flex-end;
    gap: 16px;
}

.constant {
    width: 140px;
    height: 44px;
    padding-top: 4px;
    border: 2px solid #b88a1a;
    background-color: #ffbb00;
    font-size: 27px;
}

.class-def {
    width: 619px;
    height: 46px;
    padding: 4px 9px;
    border: 2px solid #5f97d3;
    background-color: #fff;
    color: #2e86a8;
    font-weight: 300;
    text-align: left;
}

.mono {
    font-family: "Liberation Mono", "Noto Sans CJK KR", monospace;
    font-size: 23px;
    font-weight: 400;
}

.keyword {
    color: #0000d0;
}

.data {
    margin-bottom: 29px;
    border-color: #4f7a2e;
    background-color: #6da342;
}

.heap {
    margin-bottom: 11px;
    border-color: #5a4f8c;
    background-color: #753ca4;
}

.stack {
    align-items: flex-end;
    justify-content: flex-end;
    border-color: #4b6fa5;
    background-color: #8faadf;
}

.frame {
    position: relative;
    width: 67%;
    height: 153px;
    margin: -2px;
    padding-top: 10px;
    border: 1px dotted #223;
    text-align: center;
    background-color: #4070c8;
}

.frame mark {
    color: #b9c4d2;
    background-color: #5d7084;
    box-shadow: 0 0 0 2px #8da4d0;
}

/* Variable boxes lie over the frame's text */
.variable {
    position: absolute;
    bottom: 1px;
    height: 111px;
    padding: 6px 11px;
    border: 2px solid #edb92a;
    background-color: #fff;
    color: #111;
    text-align: left;
    font-size: 28px;
    white-space: nowrap;
}

.variable > div {
    height: 32px;
}

.variable > .mono {
    padding-top: 2px;
}

.variable .mono {
    color: #111;
}

.variable .keyword {
    color: #0000d0;
}

.player {
    right: 260px;
    width: 318px;
}

.number {
    right: 0;
    width: 229px;
}

.thin {
    font-weight: 300;
}

.variable .value {
    font-size: 29px;
    line-height: 28px;
}

.handle {
    position: absolute;
    width: 11px;
    height: 11px;
    margin: -6px;
    border: 2px solid #939393;
    border-radius: 50%;
    background-color: #fff;
}

.tl, .ml, .bl { left: 0; }
.tc, .bc { left: 50%; }
.tr, .mr, .br { right: 0; }
.tl, .tc, .tr { top: 0; }
.ml, .mr { top: 50%; }
.bl, .bc, .br { bottom: 0; }

.rotate {
    position: absolute;
    left: 50%;
    top: -44px;
    margin-left: -12px;
}

.pointer {
    position: absolute;
    right: 376px;
    top: -47px;
}

.scrollbar {
    width: 16px;
    padding: 2px 1px 19px 0;
    display: flex;
    flex-direction: column;
}

.sb {
    height: 15px;
    border: 1px solid #ababab;
    background-color: #fff;
}

.sb .arr {
    margin: 0;
}

.track {
    flex: 1;
    background-color: #dadada;
}

.sb-thumb {
    height: 192px;
    border: 1px solid #ababab;
    background-color: #fff;
}

.page {
    height: 18px;
}

/* Status bar */
.status {
    display: flex;
    align-items: center;
    gap: 18px;
    height: 22px;
    padding: 0 0 3px 8px;
    border-top: 1px solid #c6c6c6;
    background-color: #f3f3f3;
}

.view-tools {
    display: flex;
    align-items: center;
    height: 21px;
    margin: 0 0 -3px auto;
    padding-right: 5px;
}

.notes {
    gap: 5px;
    margin-right: 18px;
}

.view {
    width: 38px;
    height: 21px;
}

.view.on {
    background-color: #c6c6c6;
}

.zoom-btn {
    width: 7px;
}

.view + .zoom-btn {
    margin-left: 6px;
}

.status input {
    appearance: none;
    width: 100px;
    height: 14px;
    margin: 0 6px 0 3px;
    background: linear-gradient(#aaa, #aaa) no-repeat center / 100% 1px;
}

.status input::-webkit-slider-thumb {
    appearance: none;
    width: 5px;
    height: 13px;
    background-color: #666;
}

.percent {
    margin: 0 12px 0 8px;
}

/* Taskbar */
.taskbar {
    display: flex;
    height: 40px;
    color: #fff;
    background-color: #050a12;
}

.system,
.apps,
.tray {
    display: flex;
}

.system button {
    width: 48px;
}

.apps {
    padding-left: 2px;
}

.apps button {
    width: 49px;
    border-bottom: 2px solid transparent;
}

.apps .run {
    width: 41px;
    margin: 0 4px;
    border-bottom-color: #76b9ed;
}

.apps .active {
    width: 49px;
    margin: 0;
    background-color: #3a4149;
}

.tray {
    align-items: center;
    margin-left: auto;
    margin-right: 4px;
    padding-right: 18px;
    border-right: 1px solid #555;
    gap: 9px;
}

.chev {
    margin-left: 9px;
}

.net {
    margin-left: 4px;
}

.ime {
    font-size: 15px;
    margin: 0 -2px 0 0;
}

.clock {
    font-size: 12px;
    line-height: 18px;
    text-align: center;
}

.notice {
    margin-left: 13px;
}
```
